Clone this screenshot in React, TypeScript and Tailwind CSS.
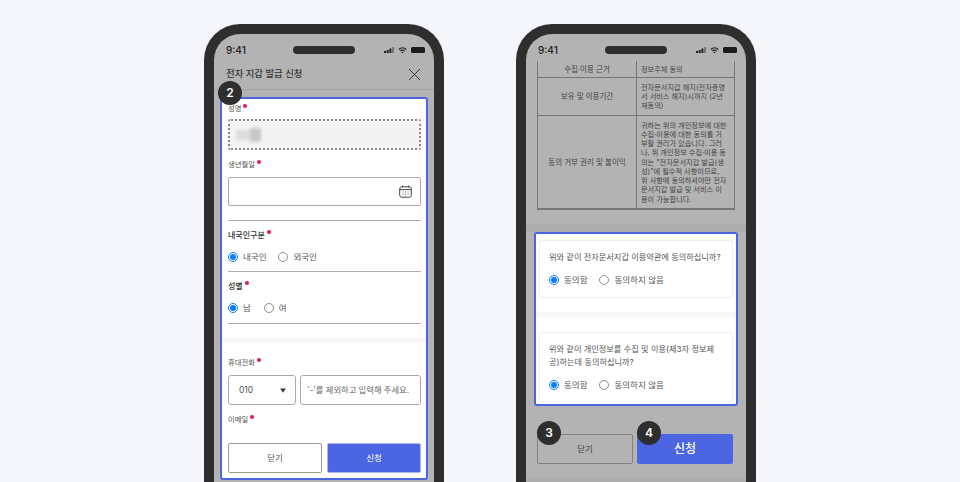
import { X } from 'lucide-react'
import type { ReactNode } from 'react'

function StatusBar() {
  return (
    <div className="grid grid-cols-[1fr_62px_1fr] items-center h-[24px] px-[12px] pt-[8px] shrink-0">
      <span className="text-[10px] font-medium leading-none text-[#1c1c1c]">9:41</span>
      <div className="h-[8px] rounded-full bg-[#2e2e2e]" />
      <div className="flex justify-end items-center gap-[4px] mr-[-3px]">
        <svg width="10" height="6" viewBox="0 0 10 6" fill="#222">
          <rect x="0" y="4" width="2" height="2" />
          <rect x="2.7" y="3" width="2" height="3" />
          <rect x="5.4" y="1.5" width="2" height="4.5" />
          <rect x="8" y="0" width="2" height="6" fill="#777" />
        </svg>
        <svg width="9" height="7" viewBox="0 0 12 9" fill="none" stroke="#222" strokeWidth="1.5">
          <path d="M1 3.2C4 .4 8 .4 11 3.2" />
          <path d="M3 5.3C4.8 3.7 7.2 3.7 9 5.3" />
          <path d="M6 8.6 4.6 7.1C5.4 6.5 6.6 6.5 7.400 7.1Z" fill="#222" stroke="none" />
        </svg>
        <div className="w-[14px] h-[6px] rounded-[1.5px] bg-[#1c1c1c]" />
      </div>
    </div>
  )
}

function Badge({ n, className }: { n: number; className: string }) {
  return (
    <div className={`absolute w-[24px] h-[24px] rounded-full bg-[#2e2e2e] text-white flex items-center justify-center text-[12px] font-semibold leading-none z-10 ${className}`}>
      {n}
    </div>
  )
}

function Label({ children, bold }: { children: ReactNode; bold?: boolean }) {
  return (
    <div className={`flex items-start leading-[12px] ${bold ? 'text-[8px] font-medium text-[#333]' : 'text-[7.300px] text-[#555]'}`}>
      {children}
      <span className="ml-[2px] mt-[1px] w-[4px] h-[4px] rounded-full bg-[#e8175d]" />
    </div>
  )
}

function Radio({ label, checked, className = '' }: { label: string; checked?: boolean; className?: string }) {
  return (
    <div className={`flex items-center gap-[5px] text-[8.500px] leading-none text-[#555] ${className}`}>
      {checked ? (
        <span className="w-[10px] h-[10px] rounded-full border border-[#0b7bff] bg-white flex items-center justify-center">
          <span className="w-[6px] h-[6px] rounded-full bg-[#0b7bff]" />
        </span>
      ) : (
        <span className="w-[10px] h-[10px] rounded-full border border-[#8e8e8e] bg-white" />
      )}
      {label}
    </div>
  )
}

function Calendar() {
  return (
    <svg width="13" height="13" viewBox="0 0 13 13" fill="none" stroke="#444" strokeWidth="1">
      <rect x="0.7" y="1.8" width="11.6" height="10.4" rx="2" />
      <path d="M.7 4.6h11.6M3.5.5v2M9.5.5v2" />
      <path d="M3.5 7h1M6 7h1M8.500 7h1M3.500 9.300h1M6 9.300h1M8.500 9.300h1" strokeWidth="0.8" />
    </svg>
  )
}

function LeftPhone() {
  return (
    <div className="relative w-[240px] h-[470px] shrink-0 rounded-t-[36px] border-x-[10px] border-t-[10px] border-[#2e2e2e] bg-[#b3b3b3] flex flex-col">
      <StatusBar />
      <div className="flex items-center justify-between h-[32px] px-[12px] pt-[1px] border-b border-[#a3a3a3] shrink-0">
        <span className="text-[9.400px] font-medium text-[#333] leading-none">전자 지갑 발급 신청</span>
        <X size={21} strokeWidth={1.1} className="text-[#333] mr-[-3px]" />
      </div>
      <div className="mx-[6px] mt-[7px] h-[383px] shrink-0 rounded-[3px] border-2 border-[#4c65e2] bg-white flex flex-col overflow-hidden">
        <div className="pl-[6px] pr-[5px] pt-[4px]">
          <Label>성명</Label>
          <div className="mt-[4px] h-[31px] rounded-[2px] border-2 border-dotted border-[#888] bg-[#f3f3f3] flex items-center pl-[6px]">
            <div className="flex items-center blur-[1.5px]">
              <div className="w-[14px] h-[10px] bg-[#ddd]" />
              <div className="w-[11px] h-[14px] bg-[#c8c8c8]" />
            </div>
          </div>
          <div className="mt-[9px]"><Label>생년월일</Label></div>
          <div className="mt-[6px] h-[29px] rounded-[2px] border border-[#aaa] flex items-center justify-end pr-[8px]">
            <Calendar />
          </div>
          <div className="mt-[14px] border-t border-[#b0b0b0] pt-[8px]">
            <Label bold>내국인구분</Label>
            <div className="flex mt-[11px] mb-[9px]">
              <Radio label="내국인" checked className="mr-[12px]" />
              <Radio label="외국인" />
            </div>
          </div>
          <div className="border-t border-[#b0b0b0] pt-[8px]">
            <Label bold>성별</Label>
            <div className="flex mt-[11px] mb-[10px]">
              <Radio label="남" checked className="mr-[13px]" />
              <Radio label="여" />
            </div>
          </div>
          <div className="border-t border-[#a8a8a8]" />
        </div>
        <div className="mt-[14px] h-[5px] bg-[#f7f7f7] shrink-0" />
        <div className="pl-[6px] pr-[5px] pt-[14px] flex-1 flex flex-col">
          <Label>휴대전화</Label>
          <div className="flex gap-[4px] mt-[6px]">
            <div className="w-[68px] h-[30px] rounded-[3px] border border-[#aaa] flex items-center justify-between pl-[10px] pr-[9px] text-[8.500px] text-[#555]">
              010
              <svg width="6" height="5" viewBox="0 0 6 5" fill="#333"><path d="M.2.6h5.600L3 4.800Z" /></svg>
            </div>
            <div className="flex-1 h-[30px] rounded-[3px] border border-[#aaa] flex items-center pl-[6px] text-[8.300px] text-[#666] whitespace-nowrap overflow-hidden">
              '-'를 제외하고 입력해 주세요.
            </div>
          </div>
          <div className="mt-[9px]"><Label>이메일</Label></div>
          <div className="flex gap-[5px] mt-[17px]">
            <div className="w-[94px] h-[30px] rounded-[2px] border border-[#999] flex items-center justify-center text-[8.500px] text-[#555]">닫기</div>
            <div className="w-[94px] h-[30px] rounded-[2px] bg-[#4c65e2] border border-[#a9b5ee] flex items-center justify-center text-[8.500px] text-white">신청</div>
          </div>
        </div>
      </div>
      <Badge n={2} className="left-[4px] top-[47px]" />
    </div>
  )
}

function Cell({ left, lines, pad }: { left: string; lines: string[]; pad: string }) {
  return (
    <div className="flex border-b border-[#777] last:border-b-2">
      <div className="w-[99px] shrink-0 border-r border-[#777] flex items-center justify-center text-[7.500px] text-[#444]">{left}</div>
      <div className={`flex-1 px-[4px] text-[7.200px] leading-[9.250px] text-[#444] whitespace-nowrap ${pad}`}>
        {lines.map((line, i) => (
          <div key={i}>{line}</div>
        ))}
      </div>
    </div>
  )
}

function Question({ children, className = '' }: { children: ReactNode; className?: string }) {
  return (
    <div className={`rounded-[3px] border border-[#eee] bg-white px-[9px] pt-[10px] ${className}`}>
      <div className="text-[8.200px] leading-[13px] text-[#555]">{children}</div>
      <div className="flex mt-[11px]">
        <Radio label="동의함" checked className="mr-[12px] gap-[3px]" />
        <Radio label="동의하지 않음" className="gap-[3px]" />
      </div>
    </div>
  )
}

function RightPhone() {
  return (
    <div className="relative w-[240px] h-[470px] shrink-0 rounded-t-[36px] border-x-[10px] border-t-[10px] border-[#2e2e2e] bg-[#b3b3b3] flex flex-col">
      <StatusBar />
      <div className="mx-[11px] mt-[3px] border-x border-[#777] shrink-0">
        <Cell left="수집·이용 근거" pad="py-[3.500px]" lines={['정보주체 동의']} />
        <Cell left="보유 및 이용기간" pad="py-[4.500px]" lines={['전자문서지갑 해지(전자증명', '서 서비스 해지)시까지 (2년', '재동의)']} />
        <Cell
          left="동의 거부 권리 및 불이익"
          pad="py-[4.500px]"
          lines={[
            '귀하는 위의 개인정보에 대한',
            '수집·이용에 대한 동의를 거',
            '부할 권리가 있습니다. 그러',
            '나, 위 개인정보 수집·이용 동',
            '의는 "전자문서지갑 발급(생',
            '성)"에 필수적 사항이므로,',
            '위 사항에 동의하셔야만 전자',
            '문서지갑 발급 및 서비스 이',
            '용이 가능합니다.',
          ]}
        />
      </div>
      <div className="mt-[14px] h-[8px] bg-[#adadad] shrink-0" />
      <div className="mx-[8px] h-[174px] shrink-0 rounded-[3px] border-2 border-[#4c65e2] bg-white flex flex-col px-[3px] pt-[6px]">
        <Question className="h-[58px]">위와 같이 전자문서지갑 이용약관에 동의하십니까?</Question>
        <div className="-mx-[3px] mt-[14px] h-[5px] bg-[#f7f7f7] shrink-0" />
        <Question className="mt-[15px] h-[70px]">
          위와 같이 개인정보를 수집 및 이용(제3자 정보제공)하는데 동의하십니까?
        </Question>
      </div>
      <div className="flex gap-[4px] mx-[11px] mt-[28px] shrink-0">
        <div className="w-[96px] h-[30px] rounded-[2px] border border-[#808080] flex items-center justify-center text-[8.500px] text-[#444]">닫기</div>
        <div className="w-[96px] h-[30px] rounded-[2px] bg-[#4c65e2] flex items-center justify-center text-[12px] font-medium text-white">신청</div>
      </div>
      <div className="mt-[14px] flex-1 bg-[#adadad]" />
      <Badge n={3} className="left-[11px] top-[387px]" />
      <Badge n={4} className="left-[111px] top-[387px]" />
    </div>
  )
}

export default function App() {
  return (
    <div className="h-[482px] overflow-hidden bg-[#f5f6fb] pt-[24px] flex justify-center gap-[72px] font-['Inter','Noto_Sans_CJK_KR',sans-serif]">
      <LeftPhone />
      <RightPhone />
    </div>
  )
}
